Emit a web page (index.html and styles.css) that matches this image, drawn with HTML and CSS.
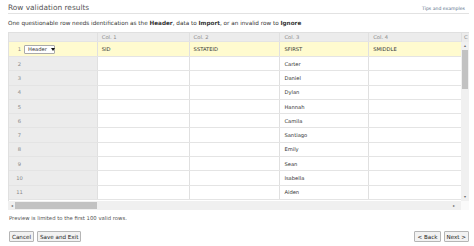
FILE: index.html
```html
<!DOCTYPE html>
<html lang="en">
<head>
    <meta charset="UTF-8">
    <title>Row validation results</title>
    <link rel="stylesheet" href="styles.css">
</head>
<body>
    <div class="page">
        <div class="title-bar">
            <h2>Row validation results</h2>
            <a class="tips" href="#">Tips and examples</a>
        </div>
        <p class="intro">One questionable row needs identification as the <b>Header</b>, data to <b>Import</b>, or an invalid row to <b>Ignore</b></p>

        <div class="grid">
            <div class="viewport">
                <div class="row head">
                    <div class="cell num-col"></div>
                    <div class="cell c1">Col. 1</div>
                    <div class="cell c2">Col. 2</div>
                    <div class="cell c3">Col. 3</div>
                    <div class="cell c4">Col. 4</div>
                </div>
                <div class="row first">
                    <div class="cell num-col"><span class="num">1</span><span class="pick">Header <i></i></span></div>
                    <div class="cell c1">SID</div>
                    <div class="cell c2">SSTATEID</div>
                    <div class="cell c3">SFIRST</div>
                    <div class="cell c4">SMIDDLE</div>
                </div>
                <div id="rows"></div>
            </div>
            <div class="vbar">
                <div class="vhead">C</div>
                <div class="vtrack">
                    <span class="arrow">&#9652;</span>
                    <div class="vthumb"></div>
                    <span class="arrow down">&#9662;</span>
                </div>
            </div>
            <div class="hbar">
                <span class="arrow">&#9666;</span>
                <div class="hthumb"></div>
                <span class="arrow right">&#9656;</span>
            </div>
            <div class="corner"></div>
        </div>

        <p class="note">Preview is limited to the first 100 valid rows.</p>

        <div class="actions">
            <div>
                <button>Cancel</button>
                <button>Save and Exit</button>
            </div>
            <div>
                <button>&lt; Back</button>
                <button>Next &gt;</button>
            </div>
        </div>
    </div>

    <script>
        const names = ['Carter', 'Daniel', 'Dylan', 'Hannah', 'Camila', 'Santiago', 'Emily', 'Sean', 'Isabella', 'Aiden'];
        const rows = document.getElementById('rows');
        names.forEach((name, i) => {
            const row = document.createElement('div');
            row.className = 'row';
            row.innerHTML = `<div class="cell num-col"><span class="num">${i + 2}</span></div>` +
                `<div class="cell c1"></div><div class="cell c2"></div>` +
                `<div class="cell c3">${name}</div><div class="cell c4"></div>`;
            rows.appendChild(row);
        });
    </script>
</body>
</html>
```

FILE: styles.css
```css
body {
    margin: 0;
    font-family: "DejaVu Sans", Verdana, sans-serif;
    color: #333;
    background-color: #fff;
}
.page {
    padding: 2px 5px 0 8px;
}
.title-bar {
    display: flex;
    justify-content: space-between;
    align-items: flex-end;
    border-bottom: 1px solid #e2e2e2;
    height: 11px;
}
h2 {
    margin: 0;
    font-size: 7.4px;
    font-weight: normal;
    color: #555;
    line-height: 10px;
}
.tips {
    font-size: 4.6px;
    color: #5a6f8a;
    text-decoration: none;
    line-height: 8px;
    margin-right: 4px;
}
.intro {
    margin: 5px 0 0;
    font-size: 5.7px;
    line-height: 8px;
    color: #333;
}
.grid {
    margin-top: 5px;
    display: grid;
    grid-template-columns: 453px 8px;
    grid-template-rows: 169px 9px;
    width: 461px;
}
.viewport {
    overflow: hidden;
    border-left: 1px solid #e0e0e0;
}
.row {
    display: flex;
    height: 14.3px;
    border-bottom: 1px solid #e4e4e4;
    box-sizing: border-box;
    font-size: 5.2px;
}
.row.head {
    height: 10px;
    background-color: #ececec;
    color: #888;
    border-top: 1px solid #e0e0e0;
}
.row.first {
    height: 15px;
    background-color: #fffbcf;
}
.cell {
    display: flex;
    align-items: center;
    padding-left: 4px;
    border-right: 1px solid #e0e0e0;
    box-sizing: border-box;
}
.num-col {
    width: 89px;
    padding-left: 0;
    background-color: #ececec;
}
.row.first .num-col {
    background-color: transparent;
}
.c1 { width: 92px; }
.c2 { width: 91px; }
.c3 { width: 89px; }
.c4 { width: 92px; border-right: none; }
.num {
    width: 21px;
    text-align: center;
    color: #888;
}
.pick {
    margin-left: -6px;
    width: 31px;
    height: 9px;
    box-sizing: border-box;
    border: 1px solid #aaa;
    border-radius: 1px;
    background-color: #fff;
    display: flex;
    align-items: center;
    padding-left: 3px;
    gap: 4px;
    color: #333;
}
.pick i {
    width: 0;
    height: 0;
    border-left: 2px solid transparent;
    border-right: 2px solid transparent;
    border-top: 3px solid #111;
}
.vbar {
    display: flex;
    flex-direction: column;
}
.vhead {
    height: 10px;
    box-sizing: border-box;
    background-color: #ececec;
    border-top: 1px solid #e0e0e0;
    border-left: 1px solid #e0e0e0;
    font-size: 5.2px;
    color: #888;
    padding: 1px 0 0 2px;
    overflow: hidden;
}
.vtrack {
    flex: 1;
    background-color: #f0f0f0;
    display: flex;
    flex-direction: column;
    align-items: center;
}
.arrow {
    font-size: 4px;
    color: #666;
    line-height: 8px;
}
.vthumb {
    width: 6px;
    height: 39px;
    background-color: #c2c2c2;
}
.arrow.down {
    margin-top: auto;
}
.hbar {
    background-color: #f0f0f0;
    display: flex;
    align-items: center;
    padding-left: 3px;
    gap: 2px;
}
.hthumb {
    width: 82px;
    height: 7px;
    background-color: #c2c2c2;
}
.arrow.right {
    margin-left: auto;
    margin-right: 6px;
}
.corner {
    background-color: #fafafa;
}
.note {
    margin: 4px 0 0 1px;
    font-size: 5.3px;
    color: #555;
    line-height: 8px;
}
.actions {
    display: flex;
    justify-content: space-between;
    margin-top: 9px;
    padding-left: 1px;
}
.actions div {
    display: flex;
    gap: 3px;
}
button {
    font-family: "DejaVu Sans", Verdana, sans-serif;
    font-size: 5.6px;
    height: 11px;
    padding: 0 2px;
    background-color: #f2f2f2;
    border: 1px solid #b5b5b5;
    border-radius: 1px;
    color: #222;
}
```
